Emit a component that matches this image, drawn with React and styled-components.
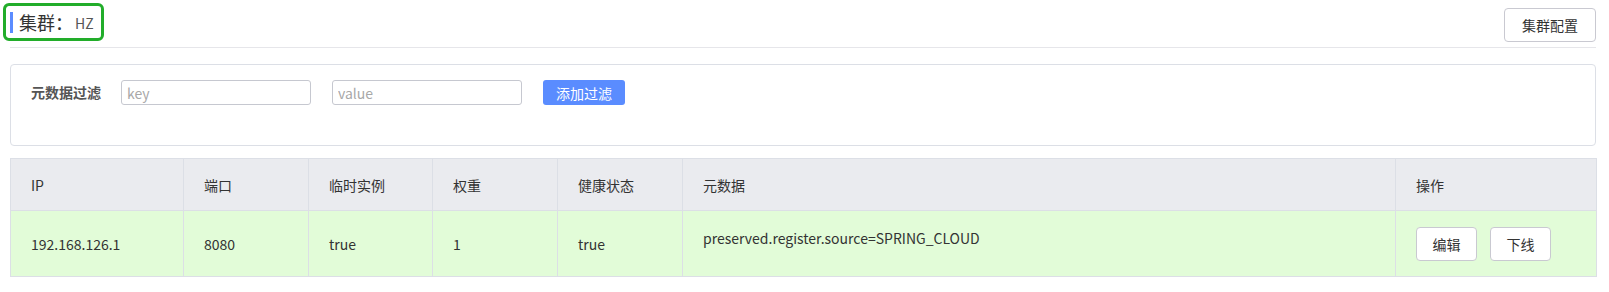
import React from 'react'
import styled, { createGlobalStyle } from 'styled-components'

const GlobalStyle = createGlobalStyle`
  body {
    margin: 0;
    background: #fff;
    font-family: "Noto Sans CJK SC", "Noto Sans", sans-serif;
    color: #333;
  }
`

const Page = styled.div`
  padding: 0 13px 0 10px;
`

const Header = styled.div`
  display: flex;
  justify-content: space-between;
  align-items: flex-start;
  height: 47px;
  border-bottom: 1px solid #e6e6ea;
`

// green highlight box around the cluster title
const TitleBox = styled.div`
  display: flex;
  align-items: center;
  margin: 3px 0 0 -7px;
  width: 101px;
  height: 38px;
  box-sizing: border-box;
  border: 3px solid #22ad2a;
  border-radius: 6px;
  padding-left: 4px;
`

const TitleBar = styled.span`
  width: 3px;
  height: 21px;
  background: #5b8cff;
  margin-right: 6px;
`

const TitleText = styled.span`
  font-size: 18px;
  color: #333;
  line-height: 1;
`

const TitleValue = styled.span`
  font-size: 14px;
  color: #555;
  margin-left: 2px;
  margin-top: 2px;
`

const Button = styled.button`
  font-family: inherit;
  font-size: 14px;
  color: #333;
  background: #fff;
  border: 1px solid #c9c9d1;
  border-radius: 4px;
  cursor: pointer;
  padding: 0;
  width: ${p => p.w || 61}px;
  height: ${p => p.h || 34}px;
  margin-top: ${p => p.top || 0}px;
`

const Card = styled.div`
  margin-top: 16px;
  height: 82px;
  box-sizing: border-box;
  border: 1px solid #dcdfe6;
  border-radius: 4px;
  padding: 15px 20px;
  display: flex;
  align-items: flex-start;
`

const FilterLabel = styled.span`
  flex-shrink: 0;
  width: 90px;
  font-size: 14px;
  font-weight: bold;
  color: #555;
  line-height: 25px;
`

const Input = styled.input`
  width: 190px;
  height: 25px;
  box-sizing: border-box;
  border: 1px solid #c6c8d0;
  border-radius: 3px;
  padding: 0 5px;
  font-family: inherit;
  font-size: 14px;
  margin-right: 21px;
  outline: none;
  &::placeholder {
    color: #a8a8a8;
  }
`

const PrimaryButton = styled.button`
  width: 82px;
  height: 25px;
  border: none;
  border-radius: 3px;
  background: #5a8cff;
  color: #fff;
  font-family: inherit;
  font-size: 14px;
  padding: 0;
`

const Table = styled.table`
  margin-top: 12px;
  width: 100%;
  border-collapse: collapse;
  table-layout: fixed;
  font-size: 14px;
`

const Th = styled.th`
  height: 51px;
  background: #eaebef;
  border: 1px solid #dcdfe6;
  text-align: left;
  font-weight: normal;
  padding: 0 20px;
  color: #333;
`

const Tr = styled.tr`
  background: #e2fcd8;
`

const Td = styled.td`
  height: 65px;
  border: 1px solid #dcdfe6;
  padding: 0 20px;
  vertical-align: ${p => (p.top ? 'top' : 'middle')};
  color: #333;
`

const MetaText = styled.div`
  padding-top: 17px;
`

const Actions = styled.div`
  display: flex;
  gap: 13px;
`

const columns = [
  { title: 'IP', width: 173 },
  { title: '端口', width: 125 },
  { title: '临时实例', width: 124 },
  { title: '权重', width: 125 },
  { title: '健康状态', width: 125 },
  { title: '元数据', width: 713 },
  { title: '操作', width: 201 },
]

const App = () => (
  <Page>
    <GlobalStyle />
    <Header>
      <TitleBox>
        <TitleBar />
        <TitleText>集群：</TitleText>
        <TitleValue>HZ</TitleValue>
      </TitleBox>
      <Button w={92} h={34} top={8}>集群配置</Button>
    </Header>
    <Card>
      <FilterLabel>元数据过滤</FilterLabel>
      <Input placeholder="key" />
      <Input placeholder="value" />
      <PrimaryButton>添加过滤</PrimaryButton>
    </Card>
    <Table>
      <colgroup>
        {columns.map(c => (
          <col key={c.title} style={{ width: c.width }} />
        ))}
      </colgroup>
      <thead>
        <tr>
          {columns.map(c => (
            <Th key={c.title}>{c.title}</Th>
          ))}
        </tr>
      </thead>
      <tbody>
        <Tr>
          <Td>192.168.126.1</Td>
          <Td>8080</Td>
          <Td>true</Td>
          <Td>1</Td>
          <Td>true</Td>
          <Td top>
            <MetaText>preserved.register.source=SPRING_CLOUD</MetaText>
          </Td>
          <Td>
            <Actions>
              <Button>编辑</Button>
              <Button>下线</Button>
            </Actions>
          </Td>
        </Tr>
      </tbody>
    </Table>
  </Page>
)

export default App
